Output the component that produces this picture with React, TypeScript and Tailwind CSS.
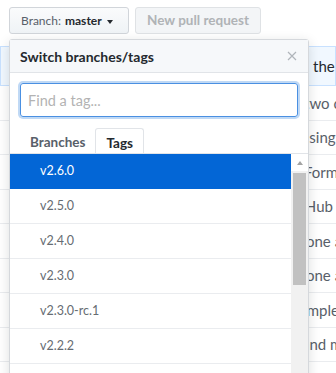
import React from "react";

const tags = ["v2.6.0", "v2.5.0", "v2.4.0", "v2.3.0", "v2.3.0-rc.1", "v2.2.2", "v2.2.1"];

const fileRows = [
  { text: "two commits into one", cls: "pl-[304px]" },
  { text: "using the new api", cls: "pl-[301px]" },
  { text: "Format the readme", cls: "pl-[304px]" },
  { text: "GitHub page fixes", cls: "pl-[285px]" },
  { text: "one at a time", cls: "pl-[306px]" },
  { text: "one at last", cls: "pl-[306px]" },
  { text: "Simple fixes", cls: "pl-[295px]" },
  { text: "and more", cls: "pl-[302px]" },
  { text: "more tests", cls: "pl-[298px]" },
];

export default function App() {
  return (
    <div className="relative w-[336px] h-[373px] overflow-hidden bg-white font-['Lato',sans-serif] text-[#24292e]">
      {/* Barra de botões */}
      <div className="flex gap-[6px] pl-[9px] pt-[7px]">
        <button className="flex items-center w-[120px] h-[27px] pl-[11px] rounded-[3px] border border-[#d1d5da] bg-gradient-to-b from-[#fafbfc] to-[#eff3f6] text-[12px] leading-none">
          <span className="text-[#586069]">Branch:</span>
          <span className="ml-[4px] font-bold">master</span>
          <span className="ml-[5px] mt-[2px] border-x-[3.5px] border-x-transparent border-t-[4px] border-t-[#24292e]"></span>
        </button>
        <button className="h-[27px] w-[126px] rounded-[3px] border border-[#dfe2e5] bg-[#f3f5f7] text-[13.5px] font-bold text-[#b0b3b6] leading-none">
          New pull request
        </button>
      </div>

      {/* Lista de arquivos por trás */}
      <div className="mt-[12px]">
        <div className="h-[40px] border border-[#c8e1ff] bg-[#f1f8ff] flex items-center pl-[312px] text-[15px] whitespace-nowrap">
          the latest commit
        </div>
        {fileRows.map((r) => (
          <div
            key={r.text}
            className={`h-[34.5px] border-b border-[#eaecef] flex items-center whitespace-nowrap text-[15px] text-[#586069] ${r.cls}`}
          >
            {r.text}
          </div>
        ))}
      </div>

      {/* Menu de branches/tags */}
      <div className="absolute left-[9px] top-[39px] w-[300px] h-[360px] border border-[#d5d8dc] bg-white rounded-t-[3px] shadow-[0_3px_12px_rgba(27,31,35,0.15)] flex flex-col">
        <div className="h-[33px] shrink-0 flex items-center justify-between pl-[10px] pr-[11px] bg-[#f6f8fa] border-b border-[#e1e4e8]">
          <span className="text-[14px] font-bold">Switch branches/tags</span>
          <svg width="10" height="10" viewBox="0 0 10 10" className="text-[#b0b5ba]">
            <path d="M1 1L9 9M9 1L1 9" stroke="currentColor" strokeWidth="1.2" />
          </svg>
        </div>

        <div className="px-[10px] pt-[10px] shrink-0">
          <input
            placeholder="Find a tag..."
            className="w-full h-[34px] px-[7px] rounded-[3px] border border-[#4a90e2] shadow-[0_0_0_2px_rgba(3,102,214,0.25)] text-[14.5px] outline-none placeholder:text-[#b3b3b3]"
          />
        </div>

        <div className="flex pl-[10px] mt-[11px] shrink-0 text-[13.5px] font-bold">
          <div className="h-[25px] px-[10px] pt-[4px] text-[#586069]">Branches</div>
          <div className="h-[25px] px-[10px] pt-[4px] border-x border-t border-[#e1e4e8] rounded-t-[3px] -mb-px bg-white">Tags</div>
        </div>

        <div className="flex flex-1 min-h-0 border-t border-[#e1e4e8]">
          <div className="flex-1">
            {tags.map((t, i) => (
              <div
                key={t}
                className={`h-[35px] flex items-center pl-[30px] text-[12.5px] border-b ${
                  i === 0 ? "bg-[#0366d6] text-white border-[#0366d6]" : "text-[#666c72] border-[#eaecef]"
                }`}
              >
                {t}
              </div>
            ))}
          </div>
          <div className="w-[17px] bg-[#f1f1f1] flex flex-col items-center">
            <div className="h-[17px] w-full bg-white flex items-center justify-center">
              <span className="border-x-[3.5px] border-x-transparent border-b-[4px] border-b-[#a3a3a3]"></span>
            </div>
            <div className="mt-[2px] w-[13px] h-[112px] bg-[#c1c1c1]"></div>
          </div>
        </div>
      </div>
    </div>
  );
}
